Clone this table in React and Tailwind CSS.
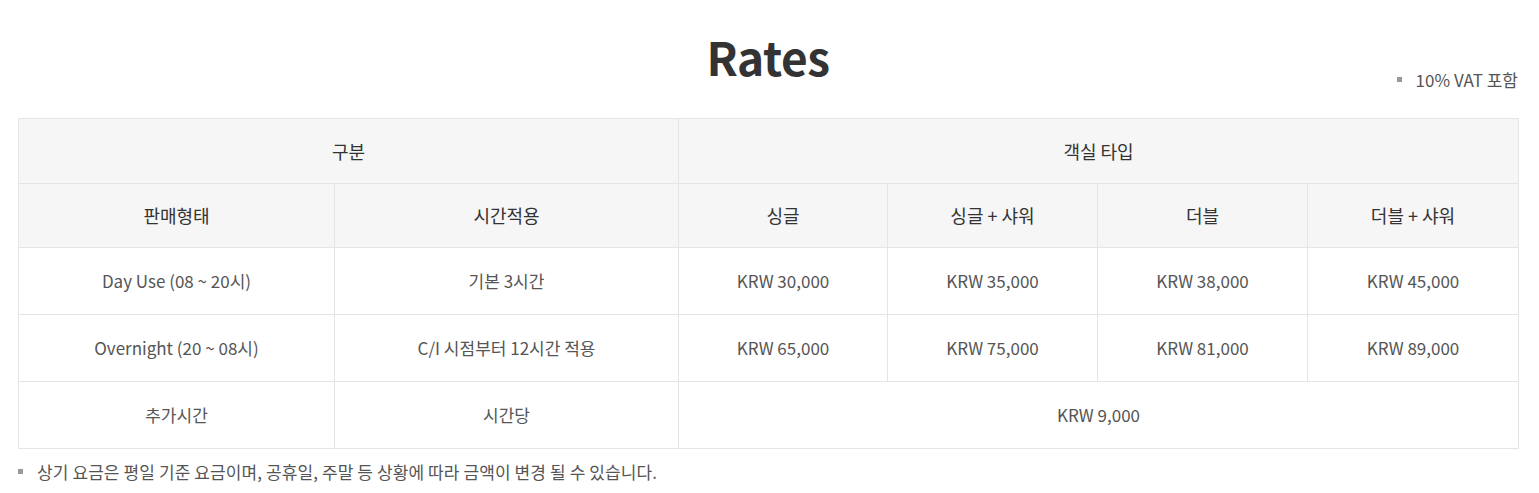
const font = { fontFamily: '"Noto Sans CJK KR", "Noto Sans", sans-serif' };

const rows = [
  ["Day Use (08 ~ 20시)", "기본 3시간", ["KRW 30,000", "KRW 35,000", "KRW 38,000", "KRW 45,000"]],
  ["Overnight (20 ~ 08시)", "C/I 시점부터 12시간 적용", ["KRW 65,000", "KRW 75,000", "KRW 81,000", "KRW 89,000"]],
];

const cell = "border border-[#e5e5e5] text-center align-middle font-normal";

export default function App() {
  return (
    <div className="bg-white text-[#444] min-h-[493px]" style={font}>
      <div className="ml-[18px] w-[1500px]">
        <div className="relative h-[118px]">
          <h2 className="pt-[24px] text-center text-[46px] font-bold leading-[64px] text-[#333] tracking-[-0.5px]">Rates</h2>
          <p className="absolute right-[0px] top-[67px] flex items-center text-[17px] text-[#555]">
            <span className="mr-[14px] inline-block h-[5px] w-[5px] bg-[#999]"></span>
            10% VAT 포함
          </p>
        </div>
        <table className="w-full border-collapse table-fixed text-[17px]">
          <colgroup>
            <col className="w-[316px]" />
            <col className="w-[344px]" />
            <col className="w-[209px]" />
            <col className="w-[210px]" />
            <col className="w-[210px]" />
            <col className="w-[211px]" />
          </colgroup>
          <thead className="bg-[#f6f6f6] text-[#333] text-[18px]">
            <tr className="h-[65px]">
              <th colSpan={2} className={cell}>구분</th>
              <th colSpan={4} className={cell}>객실 타입</th>
            </tr>
            <tr className="h-[64px]">
              <th className={cell}>판매형태</th>
              <th className={cell}>시간적용</th>
              <th className={cell}>싱글</th>
              <th className={cell}>싱글 + 샤워</th>
              <th className={cell}>더블</th>
              <th className={cell}>더블 + 샤워</th>
            </tr>
          </thead>
          <tbody className="text-[#555]">
            {rows.map(([type, time, prices]) => (
              <tr key={type} className="h-[67px]">
                <td className={cell}>{type}</td>
                <td className={cell}>{time}</td>
                {prices.map((p) => (
                  <td key={p} className={cell}>{p}</td>
                ))}
              </tr>
            ))}
            <tr className="h-[67px]">
              <td className={cell}>추가시간</td>
              <td className={cell}>시간당</td>
              <td colSpan={4} className={cell}>KRW 9,000</td>
            </tr>
          </tbody>
        </table>
        <p className="mt-[10px] flex items-center text-[17px] text-[#555] tracking-[0.1px]">
          <span className="mr-[14px] inline-block h-[5px] w-[5px] bg-[#999]"></span>
          상기 요금은 평일 기준 요금이며, 공휴일, 주말 등 상황에 따라 금액이 변경 될 수 있습니다.
        </p>
      </div>
    </div>
  );
}
